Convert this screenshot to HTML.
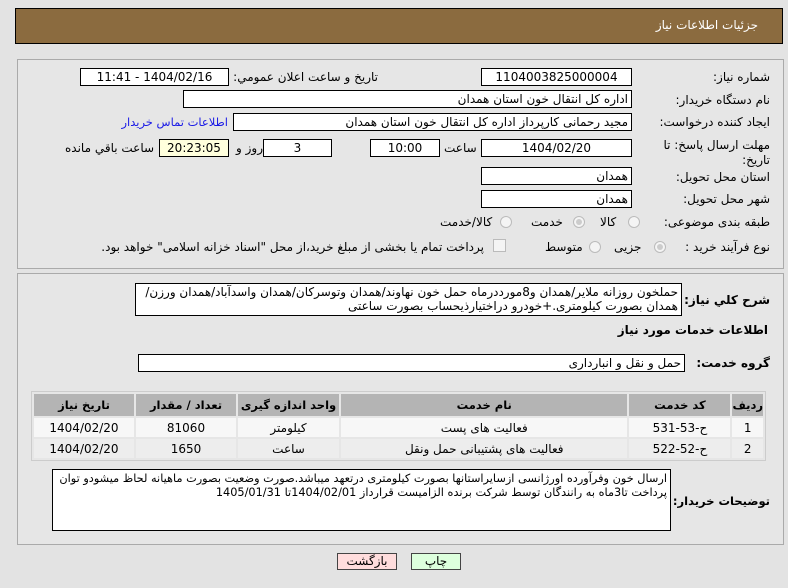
<!DOCTYPE html>
<html><head><meta charset="utf-8"><style>
body{margin:0;width:788px;height:588px;background:#e3e3e3;font-family:"DejaVu Sans",sans-serif;font-size:12px;color:#000;position:relative;overflow:hidden}
.a{position:absolute;white-space:nowrap}
.hdr{left:15px;top:8px;width:766px;height:34px;background:#8b6b3f;border:1px solid #000}
.pan{position:absolute;left:17px;width:765px;background:#e6e6e6;border:1px solid #aaa}
.box{position:absolute;background:#fff;border:1px solid #000;box-sizing:border-box;height:18px;line-height:16px;padding:0 3px;white-space:nowrap;direction:rtl;overflow:hidden}
.c{text-align:center}
.l{direction:rtl;text-align:right}
.rad{position:absolute;width:12px;height:12px;border-radius:50%;border:1px solid #bbb;background:#f4f4f4;box-sizing:border-box}
.rad.on::after{content:"";position:absolute;left:2px;top:2px;width:6px;height:6px;border-radius:50%;background:#ccc}
table{position:absolute;left:31px;top:391px;width:735px;border-collapse:separate;border-spacing:2px;background:#e6e6e6;border:1px solid #ccc;direction:rtl}
td{text-align:center;height:19px;padding:0}
th{background:#b4b4b4;height:22px;font-weight:bold;padding:0;font-size:11.5px}
tr.r1 td{background:#f7f7f7}tr.r2 td{background:#ededed}
.btn{position:absolute;top:553px;height:17px;border:1px solid #444;box-sizing:border-box;text-align:center;line-height:15px}
.b{font-weight:bold;font-size:12px}
</style></head><body>
<div class="a hdr"></div>
<div class="a" style="right:30px;top:18px;color:#fff">جزئیات اطلاعات نیاز</div>
<div class="pan" style="top:59px;height:208px"></div>
<div class="pan" style="top:273px;height:270px"></div>

<div class="a l" style="right:18px;top:70px">شماره نیاز:</div>
<div class="box c" style="left:481px;top:68px;width:151px">1104003825000004</div>
<div class="a l" style="right:410px;top:70px">تاریخ و ساعت اعلان عمومي:</div>
<div class="box c" style="left:80px;top:68px;width:149px">1404/02/16 - 11:41</div>

<div class="a l" style="right:18px;top:93px">نام دستگاه خریدار:</div>
<div class="box" style="left:183px;top:90px;width:449px">اداره کل انتقال خون استان همدان</div>

<div class="a l" style="right:18px;top:115px">ایجاد کننده درخواست:</div>
<div class="box" style="left:233px;top:113px;width:399px">مجید رحمانی کارپرداز اداره کل انتقال خون استان همدان</div>
<div class="a l" style="right:560px;top:115px;color:#1a1ae6;font-size:11.5px">اطلاعات تماس خریدار</div>

<div class="a l" style="right:18px;top:138px">مهلت ارسال پاسخ: تا</div>
<div class="a l" style="right:18px;top:153px">تاریخ:</div>
<div class="box c" style="left:481px;top:139px;width:151px">1404/02/20</div>
<div class="a" style="left:444px;top:141px">ساعت</div>
<div class="box c" style="left:370px;top:139px;width:70px">10:00</div>
<div class="box c" style="left:263px;top:139px;width:69px">3</div>
<div class="a" style="left:236px;top:141px">روز و</div>
<div class="box c" style="left:159px;top:139px;width:70px;background:#ffffdd">20:23:05</div>
<div class="a" style="left:65px;top:141px">ساعت باقي مانده</div>

<div class="a l" style="right:18px;top:170px">استان محل تحویل:</div>
<div class="box" style="left:481px;top:167px;width:151px">همدان</div>
<div class="a l" style="right:18px;top:192px">شهر محل تحویل:</div>
<div class="box" style="left:481px;top:190px;width:151px">همدان</div>

<div class="a l" style="right:18px;top:215px">طبقه بندی موضوعی:</div>
<div class="rad" style="left:628px;top:216px"></div><div class="a" style="left:600px;top:215px">کالا</div>
<div class="rad on" style="left:573px;top:216px"></div><div class="a" style="left:531px;top:215px">خدمت</div>
<div class="rad" style="left:500px;top:216px"></div><div class="a" style="left:440px;top:215px">کالا/خدمت</div>

<div class="a l" style="right:18px;top:240px">نوع فرآیند خرید :</div>
<div class="rad on" style="left:654px;top:241px"></div><div class="a" style="left:614px;top:240px">جزیی</div>
<div class="rad" style="left:589px;top:241px"></div><div class="a" style="left:545px;top:240px">متوسط</div>
<div class="a" style="left:493px;top:239px;width:11px;height:11px;border:1px solid #bbb;background:#f4f4f4"></div>
<div class="a l" style="right:304px;top:240px">پرداخت تمام یا بخشی از مبلغ خرید،از محل "اسناد خزانه اسلامی" خواهد بود.</div>

<div class="a l b" style="right:18px;top:293px">شرح کلي نياز:</div>
<div class="box" style="left:135px;top:283px;width:547px;height:33px;line-height:14px;white-space:normal;padding:1px 3px">حملخون روزانه ملایر/همدان و8مورددرماه حمل خون نهاوند/همدان وتوسرکان/همدان واسدآباد/همدان ورزن/همدان بصورت کیلومتری.+خودرو دراختیارذیحساب بصورت ساعتی</div>
<div class="a l b" style="right:20px;top:323px">اطلاعات خدمات مورد نیاز</div>
<div class="a l b" style="right:18px;top:356px">گروه خدمت:</div>
<div class="box" style="left:138px;top:354px;width:547px">حمل و نقل و انبارداری</div>

<table>
<tr><th style="width:26px">ردیف</th><th style="width:101px">کد خدمت</th><th>نام خدمت</th><th style="width:101px">واحد اندازه گیری</th><th style="width:100px">تعداد / مقدار</th><th style="width:100px">تاریخ نیاز</th></tr>
<tr class="r1"><td>1</td><td>ح-53-531</td><td>فعالیت های پست</td><td>کیلومتر</td><td>81060</td><td>1404/02/20</td></tr>
<tr class="r2"><td>2</td><td>ح-52-522</td><td>فعالیت های پشتیبانی حمل ونقل</td><td>ساعت</td><td>1650</td><td>1404/02/20</td></tr>
</table>

<div class="a l b" style="right:18px;top:494px;font-size:11.5px">توضیحات خریدار:</div>
<div class="box" style="left:52px;top:469px;width:619px;height:62px;line-height:14px;white-space:normal;padding:2px 3px;font-size:11.3px;letter-spacing:-0.2px">ارسال خون وفرآورده اورژانسی ازسایراستانها بصورت کیلومتری درتعهد میباشد.صورت وضعیت بصورت ماهیانه لحاظ میشودو توان پرداخت تا3ماه به رانندگان توسط شرکت برنده الزامیست قرارداز 1404/02/01تا 1405/01/31</div>

<div class="btn" style="left:337px;width:60px;background:#fdd">بازگشت</div>
<div class="btn" style="left:411px;width:50px;background:#dfd">چاپ</div>
</body></html>
